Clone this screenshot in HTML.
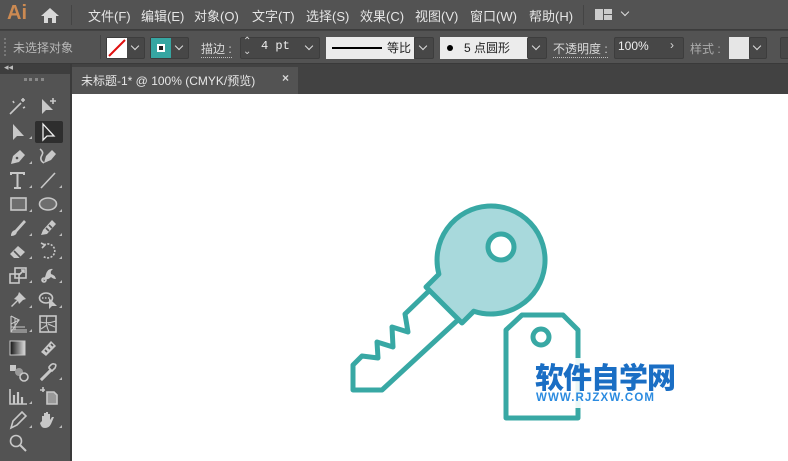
<!DOCTYPE html>
<html><head><meta charset="utf-8"><style>
*{margin:0;padding:0;box-sizing:border-box}
body{width:788px;height:461px;overflow:hidden;background:#424242;font-family:"Liberation Sans","Noto Sans CJK SC",sans-serif;position:relative;color:#e0e0e0}
.abs{position:absolute}
#menu{left:0;top:0;width:788px;height:30px;background:#535353;border-bottom:1px solid #3c3c3c}
#menu span.m{position:absolute;top:6px;font-size:13px;color:#e6e6e6}
#ctrl{left:0;top:31px;width:788px;height:33px;background:#535353;border-bottom:1px solid #3a3a3a}
.t{font-size:12px;color:#d8d8d8;position:absolute}
.box{position:absolute;background:#474747;border:1px solid #3d3d3d;border-radius:2px}
.chev{position:absolute;width:6px;height:6px;border-right:1.5px solid #ddd;border-bottom:1.5px solid #ddd;transform:rotate(45deg)}
#tools{left:0;top:64px;width:70px;height:397px;background:#535353}
#tabbar{left:72px;top:64px;width:716px;height:30px;background:#424242}
#canvas{left:72px;top:94px;width:716px;height:367px;background:#fff}
</style></head><body>
<div id="menu" class="abs">
 <span class="abs" style="left:7px;top:2px;font-size:20px;color:#cc8a52;font-weight:bold">Ai</span>
 <svg class="abs" style="left:40px;top:7px" width="20" height="17"><path d="M10 1 L19 9 L16 9 L16 16 L12 16 L12 11 L8 11 L8 16 L4 16 L4 9 L1 9 Z" fill="#d8d8d8"/></svg>
 <div class="abs" style="left:71px;top:5px;width:1px;height:20px;background:#444"></div>
 <span class="m" style="left:88px">文件(F)</span>
 <span class="m" style="left:141px">编辑(E)</span>
 <span class="m" style="left:194px">对象(O)</span>
 <span class="m" style="left:252px">文字(T)</span>
 <span class="m" style="left:306px">选择(S)</span>
 <span class="m" style="left:360px">效果(C)</span>
 <span class="m" style="left:415px">视图(V)</span>
 <span class="m" style="left:470px">窗口(W)</span>
 <span class="m" style="left:529px">帮助(H)</span>
 <div class="abs" style="left:583px;top:5px;width:1px;height:20px;background:#444"></div>
 <div class="abs" style="left:595px;top:9px;width:8px;height:11px;background:#ccc"></div>
 <div class="abs" style="left:604px;top:9px;width:8px;height:5px;background:#ccc"></div>
 <div class="abs" style="left:604px;top:15px;width:8px;height:5px;background:#ccc"></div>
 <div class="chev" style="left:622px;top:9px"></div>
</div>
<div id="ctrl" class="abs">
 <div class="abs" style="left:4px;top:7px;width:2px;height:18px;border-left:2px dotted #777"></div>
 <span class="t" style="left:13px;top:8px;color:#b8b8b8">未选择对象</span>
 <div class="abs" style="left:100px;top:4px;width:1px;height:24px;background:#444"></div>
 <div class="box" style="left:106px;top:6px;width:39px;height:22px"></div>
 <svg class="abs" style="left:107px;top:7px" width="20" height="20"><rect width="20" height="20" fill="#fff"/><line x1="2" y1="18" x2="18" y2="2" stroke="#e01010" stroke-width="2"/></svg>
 <div class="chev" style="left:132px;top:12px"></div>
 <div class="box" style="left:150px;top:6px;width:39px;height:22px"></div>
 <div class="abs" style="left:151px;top:7px;width:20px;height:20px;background:#36a6a2"></div>
 <div class="abs" style="left:157px;top:13px;width:8px;height:8px;border:2px solid #fff;background:#222"></div>
 <div class="chev" style="left:176px;top:12px"></div>
 <span class="t" style="left:201px;top:9px;border-bottom:1px dotted #bbb">描边 :</span>
 <div class="box" style="left:240px;top:6px;width:80px;height:22px"></div>
 <span class="t" style="left:243px;top:5px;font-size:10px">⌃</span><span class="t" style="left:243px;top:15px;font-size:10px">⌄</span>
 <span class="t" style="left:261px;top:8px;font-family:'Liberation Mono',monospace;color:#eee">4 pt</span>
 <div class="chev" style="left:306px;top:12px"></div>
 <div class="abs" style="left:326px;top:6px;width:88px;height:22px;background:#ececec"></div>
 <div class="abs" style="left:332px;top:16px;width:50px;height:2px;background:#000"></div>
 <span class="t" style="left:387px;top:8px;color:#222">等比</span>
 <div class="box" style="left:414px;top:6px;width:20px;height:22px"></div><div class="chev" style="left:420px;top:12px"></div>
 <div class="abs" style="left:440px;top:6px;width:88px;height:22px;background:#ececec"></div>
 <div class="abs" style="left:447px;top:14px;width:6px;height:6px;border-radius:50%;background:#000"></div>
 <span class="t" style="left:464px;top:8px;color:#222">5 点圆形</span>
 <div class="box" style="left:527px;top:6px;width:20px;height:22px"></div><div class="chev" style="left:533px;top:12px"></div>
 <span class="t" style="left:553px;top:9px;border-bottom:1px dotted #bbb">不透明度 :</span>
 <div class="box" style="left:614px;top:6px;width:70px;height:22px"></div>
 <span class="t" style="left:618px;top:8px;color:#eee">100%</span>
 <span class="t" style="left:670px;top:7px">›</span>
 <span class="t" style="left:690px;top:9px;color:#aaa">样式 :</span>
 <div class="abs" style="left:729px;top:6px;width:20px;height:22px;background:#e6e6e6"></div>
 <div class="box" style="left:749px;top:6px;width:18px;height:22px"></div><div class="chev" style="left:754px;top:12px"></div>
 <div class="box" style="left:780px;top:6px;width:12px;height:22px"></div>
</div>
<div id="tools" class="abs">
 <div class="abs" style="left:0;top:0;width:70px;height:10px;background:#3e3e3e"></div>
 <span class="abs" style="left:4px;top:-2px;font-size:9px;color:#bbb">◂◂</span>
 <div class="abs" style="left:24px;top:14px;width:20px;height:3px;border-top:3px dotted #888"></div>
 <div class="abs" style="left:35px;top:57px;width:28px;height:22px;background:#2e2e2e;border-radius:2px"></div>
 <div class="abs" style="left:70px;top:0;width:2px;height:397px;background:#3a3a3a"></div>
</div>
<svg class="abs" style="left:0;top:0" width="72" height="461" fill="none" stroke="#c8c8c8" stroke-width="1.6">
 <!-- row1 y=106 -->
 <g transform="translate(8,96)"><path d="M2 18 L13 7"/><path d="M15 2 v4 M13 4 h4 M5 5 l1 2 M17 11 l-2 1" /></g>
 <g transform="translate(38,96)"><path d="M4 3 L4 18 L8 14 L15 14 Z" fill="#c8c8c8" stroke="none"/><path d="M15 2 v6 M12 5 h6"/></g>
 <!-- row2 y=131 -->
 <g transform="translate(8,121)"><path d="M5 3 L5 19 L9 15 L16 15 Z" fill="#c8c8c8" stroke="none"/></g>
 <g transform="translate(38,121)"><path d="M5 3 L5 19 L9 15 L16 15 Z" stroke="#eee" stroke-width="1.3"/></g>
 <!-- row3 y=156 -->
 <g transform="translate(8,146)"><path d="M3 18 L5 10 L12 4 L17 9 L11 16 Z" fill="#c8c8c8" stroke="none"/><circle cx="9" cy="12" r="1.3" fill="#535353" stroke="none"/></g>
 <g transform="translate(38,146)"><path d="M6 17 L8 10 L14 4 L18 8 L13 14 Z" fill="#c8c8c8" stroke="none"/><path d="M6 17 q-5 -3 -2 -8 q2 -3 -2 -6"/></g>
 <!-- row4 y=180 -->
 <g transform="translate(8,170)"><path d="M3 5 v-2 h13 v2 M9.5 3 v15 M6 18 h7" stroke-width="2"/></g>
 <g transform="translate(38,170)"><path d="M3 18 L17 3"/></g>
 <!-- row5 y=204 -->
 <g transform="translate(8,194)"><rect x="3" y="4" width="15" height="12" fill="#6e6e6e"/></g>
 <g transform="translate(38,194)"><ellipse cx="10" cy="10" rx="8.5" ry="6" fill="#6e6e6e"/></g>
 <!-- row6 y=228 -->
 <g transform="translate(8,218)"><path d="M3 18 q0 -5 4 -6 l9 -10 l2 2 l-9 10 q-1 4 -6 4 Z" fill="#c8c8c8" stroke="none"/></g>
 <g transform="translate(38,218)"><path d="M3 17 L5 12 L14 2 L18 6 L9 16 Z" fill="#c8c8c8" stroke="none"/><path d="M8 10 l3 3 M11 7 l3 3" stroke="#535353"/></g>
 <!-- row7 y=251 -->
 <g transform="translate(8,241)"><path d="M2 13 L10 5 L17 11 L11 17 L6 17 Z" fill="#c8c8c8" stroke="none"/><path d="M6 10 L12 16" stroke="#535353"/></g>
 <g transform="translate(38,241)"><path d="M6 4 A7 7 0 1 1 5 15" stroke-dasharray="2 1.5"/><path d="M3 2 L7 4 L4 7" /></g>
 <!-- row8 y=275 -->
 <g transform="translate(8,265)"><rect x="2" y="9" width="9" height="9"/><rect x="7" y="3" width="11" height="10"/><path d="M11 10 L16 5 M13 5 h3 v3"/></g>
 <g transform="translate(38,265)"><path d="M3 16 q4 -2 5 -7 q2 -6 7 -5 q-3 2 -2 5 q4 1 5 5 q-3 0 -5 -2 q-3 3 -6 2 q0 2 -4 2" fill="#c8c8c8" stroke="none"/><circle cx="6" cy="15" r="2"/></g>
 <!-- row9 y=300 -->
 <g transform="translate(8,290)"><path d="M11 2 L18 9 L15 10 L11 14 L10 11 L4 17 L3 16 L9 10 L6 9 L10 5 Z" fill="#c8c8c8" stroke="none"/></g>
 <g transform="translate(38,290)"><ellipse cx="8" cy="8" rx="6.5" ry="5"/><path d="M4 8 h8" stroke-dasharray="1.5 1.5"/><path d="M11 8 L11 19 L14 16 L19 16 Z" fill="#c8c8c8" stroke="none"/></g>
 <!-- row10 y=324 -->
 <g transform="translate(8,314)"><path d="M3 2 v16 h16 M3 2 l8 4 l-8 4 M3 18 L11 6 M7 4 v12 M3 13 h14 M3 16 h16" stroke-width="1.1"/></g>
 <g transform="translate(38,314)"><rect x="2" y="2" width="16" height="16"/><path d="M2 8 q8 2 16 -1 M9 2 q-2 8 2 16 M3 15 l6 -4 M10 10 l7 3" stroke-width="1.1"/></g>
 <!-- row11 y=348 -->
 <defs><linearGradient id="gr" x1="0" x2="1"><stop offset="0" stop-color="#111"/><stop offset="1" stop-color="#ddd"/></linearGradient></defs>
 <g transform="translate(8,338)"><rect x="2" y="3" width="15" height="14" fill="url(#gr)" stroke="#c8c8c8" stroke-width="1"/></g>
 <g transform="translate(38,338)"><path d="M3 14 L13 3 L18 8 L8 18 Z" fill="#c8c8c8" stroke="none"/><path d="M7 12 l2 2 M10 9 l2 2 M13 6 l2 2" stroke="#535353"/></g>
 <!-- row12 y=372 -->
 <g transform="translate(8,362)"><rect x="2" y="3" width="6" height="6" fill="#c8c8c8" stroke="none"/><circle cx="11" cy="10" r="4" fill="#999" stroke="none"/><circle cx="16" cy="15" r="4"/></g>
 <g transform="translate(38,362)"><path d="M4 18 L3 17 L12 8 L13 9 Z M11 6 l3 3 l3 -3 q2 -4 -1 -4 q-2 -1 -5 3 Z"/></g>
 <!-- row13 y=396 -->
 <g transform="translate(8,386)"><path d="M2 3 v15 h17" /><path d="M6 9 v9 M10 6 v12 M14 11 v7" stroke-width="2.2"/></g>
 <g transform="translate(38,386)"><path d="M2 4 h5 M5 1 v5"/><path d="M9 6 h7 l3 3 v9 h-10 Z" fill="#999" stroke="#c8c8c8"/></g>
 <!-- row14 y=420 -->
 <g transform="translate(8,410)"><path d="M3 18 L5 11 L14 2 L18 6 L9 15 Z"/></g>
 <g transform="translate(38,410)"><path d="M4 11 v-5 h2 v4 v-7 h2 v7 v-8 h2 v8 v-6 h2 v6 l2 -3 h2 l-3 7 q-2 4 -6 4 q-4 0 -5 -5 Z" fill="#c8c8c8" stroke="none"/></g>
 <!-- row15 y=443 -->
 <g transform="translate(8,433)"><circle cx="8" cy="8" r="5.5"/><path d="M12 12 L18 18" stroke-width="2"/></g>
 <!-- small triangles -->
 <g fill="#bbb" stroke="none">
  <path d="M29 139 l3 0 l0 -3 Z M29 164 l3 0 l0 -3 Z M29 188 l3 0 l0 -3 Z M59 188 l3 0 l0 -3 Z M29 212 l3 0 l0 -3 Z M59 212 l3 0 l0 -3 Z M29 236 l3 0 l0 -3 Z M59 236 l3 0 l0 -3 Z M29 259 l3 0 l0 -3 Z M59 259 l3 0 l0 -3 Z M29 283 l3 0 l0 -3 Z M59 283 l3 0 l0 -3 Z M29 308 l3 0 l0 -3 Z M59 308 l3 0 l0 -3 Z M29 332 l3 0 l0 -3 Z M59 380 l3 0 l0 -3 Z M29 404 l3 0 l0 -3 Z M29 428 l3 0 l0 -3 Z M59 428 l3 0 l0 -3 Z"/>
 </g>
</svg>
<div id="tabbar" class="abs">
 <div class="abs" style="left:0;top:3px;width:226px;height:27px;background:#535353"></div>
 <span class="t" style="left:9px;top:8px;font-size:12px;color:#e6e6e6">未标题-1* @ 100% (CMYK/预览)</span>
 <span class="t" style="left:210px;top:7px;font-weight:bold">×</span>
</div>
<div id="canvas" class="abs"></div>
<svg class="abs" style="left:0;top:0" width="788" height="461">
 <g stroke="#38a8a4" stroke-width="5" stroke-linejoin="round" fill="none">
  <path d="M432 288 L405 314 L408 332 L392 327 L393 347 L377 342 L378 358 L362 356 L353 365 L353 390 L382 390 L460 318" fill="#fff"/>
  <path d="M426 287 L438.9 274.1 A54 54 0 1 1 473.8 311.2 L462 323 Z" fill="#a8d9dc"/>
  <circle cx="501" cy="247" r="13" fill="#fff"/>
  <path d="M522 315 L563 315 L578 330 L578 418 L506 418 L506 330 Z" fill="#fff"/>
  <circle cx="541" cy="337" r="8" fill="#fff"/>
 </g>
 <rect x="533" y="358" width="148" height="50" fill="#fff" opacity="0.9"/>
 <text x="535" y="388" font-family="'Noto Sans CJK SC',sans-serif" font-weight="900" font-size="29" fill="#1a6ec4" letter-spacing="-1">软件自学网</text>
 <text x="536" y="401" font-family="'Liberation Sans',sans-serif" font-weight="bold" font-size="11.5" fill="#2b8be0" letter-spacing="1.1">WWW.RJZXW.COM</text>
</svg>
</body></html>
